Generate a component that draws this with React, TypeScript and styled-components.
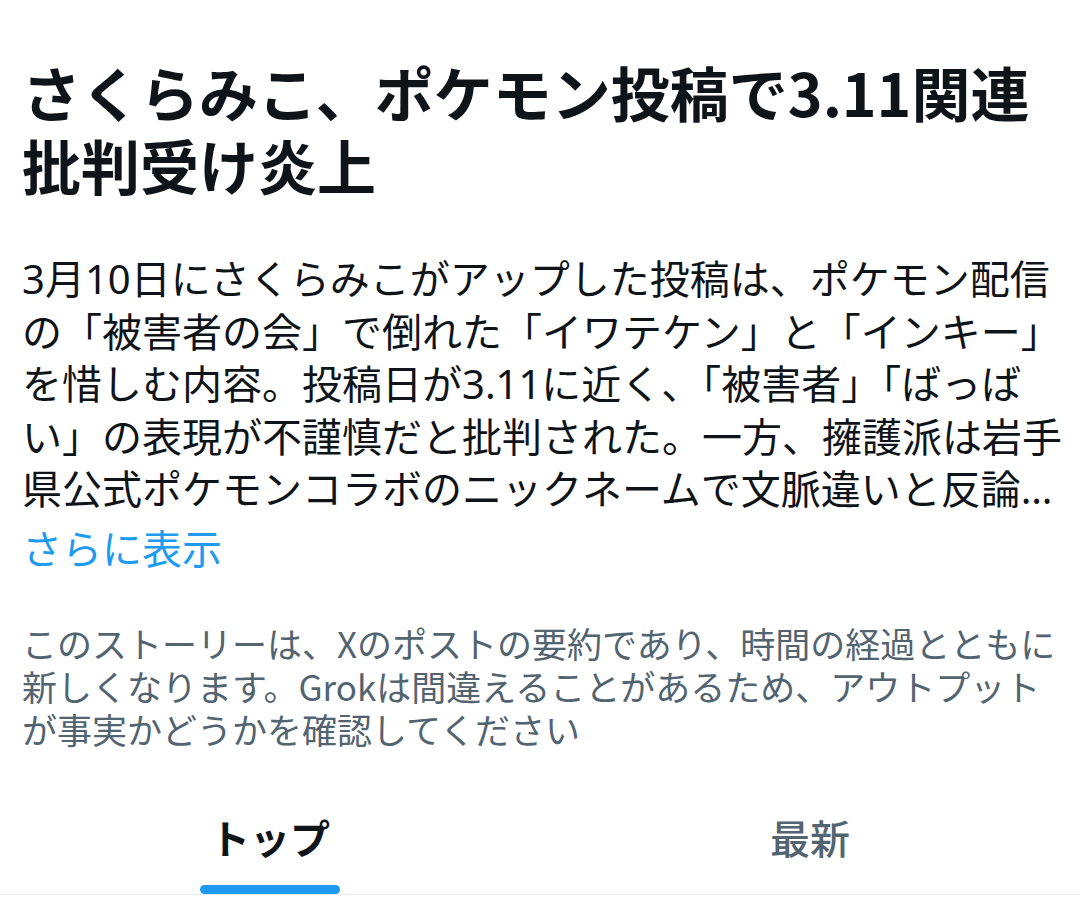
import React from "react";
import styled, { createGlobalStyle } from "styled-components";

const GlobalStyle = createGlobalStyle`
  html, body {
    margin: 0;
    padding: 0;
    background: #ffffff;
  }
  body {
    font-family: "Noto Sans CJK JP", "Noto Sans", sans-serif;
    -webkit-font-smoothing: antialiased;
  }
`;

const Page = styled.main`
  width: 1080px;
  height: 899px;
  overflow: hidden;
  display: flex;
  flex-direction: column;
  background: #ffffff;
`;

const Story = styled.section`
  display: flex;
  flex-direction: column;
  padding: 55px 8px 0 22px;
`;

const Title = styled.h1`
  margin: 0;
  font-family: "Noto Sans CJK JP", sans-serif;
  font-size: 59px;
  font-weight: 700;
  line-height: 73px;
  color: #0f1419;
`;

const Summary = styled.p`
  margin: 52px 0 0;
  font-family: "Noto Sans", "Noto Sans CJK JP", sans-serif;
  font-size: 40px;
  font-weight: 400;
  line-height: 52.5px;
  color: #0f1419;
  display: -webkit-box;
  -webkit-box-orient: vertical;
  -webkit-line-clamp: 5;
  overflow: hidden;
`;

const ShowMore = styled.a`
  margin-top: 5px;
  font-family: "Noto Sans CJK JP", sans-serif;
  font-size: 40px;
  line-height: 52px;
  color: #1d9bf0;
  text-decoration: none;
  cursor: pointer;
`;

const Disclaimer = styled.p`
  margin: 48px 0 0;
  font-family: "Noto Sans CJK JP", sans-serif;
  font-size: 35px;
  line-height: 43px;
  color: #536471;
`;

const TabBar = styled.nav`
  margin-top: auto;
  margin-bottom: 4px;
  display: grid;
  grid-template-columns: 1fr 1fr;
  border-bottom: 1px solid #e6ecf0;
`;

const Tab = styled.div<{ $active?: boolean }>`
  display: flex;
  flex-direction: column;
  align-items: center;
  justify-content: flex-end;
  height: 100px;
  font-family: "Noto Sans CJK JP", sans-serif;
  font-size: 40px;
  font-weight: ${(p) => (p.$active ? 700 : 500)};
  color: ${(p) => (p.$active ? "#0f1419" : "#536471")};
`;

const TabLabel = styled.span`
  line-height: 52px;
  padding-bottom: 22px;
`;

const Indicator = styled.span<{ $active?: boolean }>`
  width: 140px;
  height: 9px;
  border-radius: 5px;
  background: ${(p) => (p.$active ? "#1d9bf0" : "transparent")};
`;

export default function App() {
  return (
    <>
      <GlobalStyle />
      <Page>
        <Story>
          <Title>さくらみこ、ポケモン投稿で3.11関連批判受け炎上</Title>
          <Summary>
            3月10日にさくらみこがアップした投稿は、ポケモン配信の「被害者の会」で倒れた「イワテケン」と「インキー」を惜しむ内容。投稿日が3.11に近く、「被害者」「ばっばい」の表現が不謹慎だと批判された。一方、擁護派は岩手県公式ポケモンコラボのニックネームで文脈違いと反論している。
          </Summary>
          <ShowMore>さらに表示</ShowMore>
          <Disclaimer>
            このストーリーは、Xのポストの要約であり、時間の経過とともに新しくなります。Grokは間違えることがあるため、アウトプットが事実かどうかを確認してください
          </Disclaimer>
        </Story>
        <TabBar>
          <Tab $active>
            <TabLabel>トップ</TabLabel>
            <Indicator $active />
          </Tab>
          <Tab>
            <TabLabel>最新</TabLabel>
            <Indicator />
          </Tab>
        </TabBar>
      </Page>
    </>
  );
}
